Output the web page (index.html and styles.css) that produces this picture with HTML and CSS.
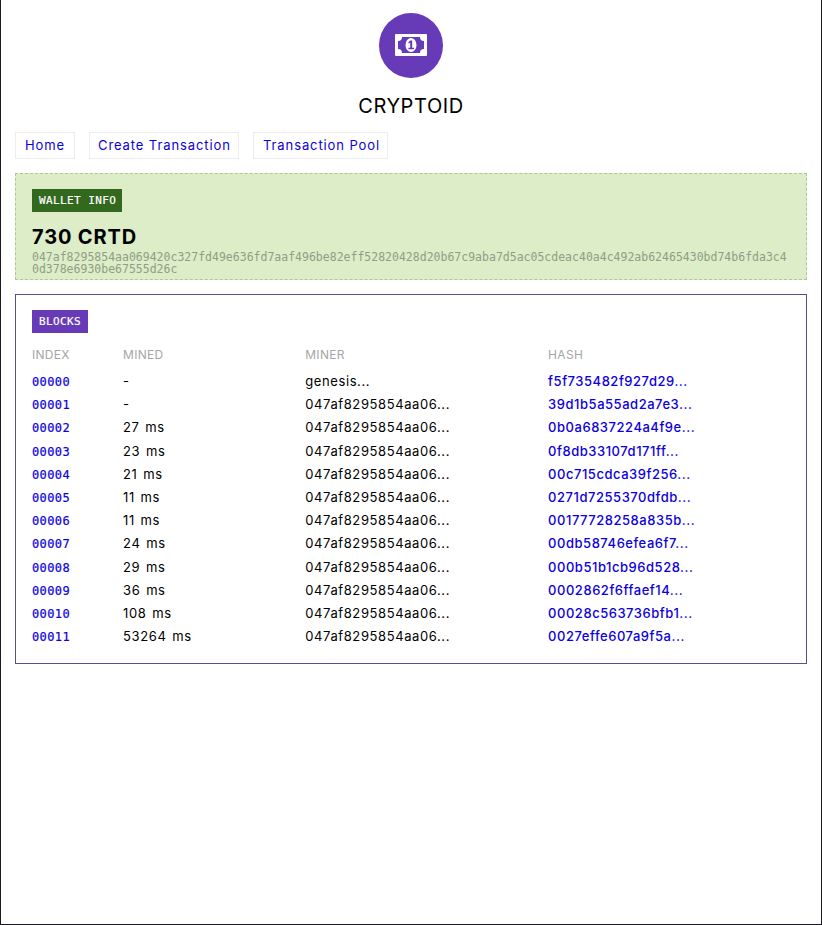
FILE: index.html
```html
<!DOCTYPE html>
<html lang="en">
<head>
<meta charset="utf-8">
<title>Cryptoid</title>
<link rel="stylesheet" href="styles.css">
</head>
<body>
<header class="brand">
  <div class="logo">
    <svg viewBox="0 0 32 22" width="32" height="22" aria-hidden="true">
      <path fill="#fff" fill-rule="evenodd" d="M1 0H31Q32 0 32 1V21Q32 22 31 22H1Q0 22 0 21V1Q0 0 1 0ZM7 3Q7 7 3 7V15Q7 15 7 19H25Q25 15 29 15V7Q25 7 25 3Z"/>
      <ellipse cx="16" cy="11" rx="5.5" ry="7" fill="#fff"/>
      <path fill="#673ab7" d="M15.3 6.5H17.2V13.8H19V15.3H13.4V13.8H15.2V8.8L13.5 9.5V7.9Z"/>
    </svg>
  </div>
  <h1>CRYPTOID</h1>
</header>
<nav class="menu">
  <a class="home" href="#">Home</a>
  <a class="create" href="#">Create Transaction</a>
  <a class="pool" href="#">Transaction Pool</a>
</nav>
<section class="wallet">
  <span class="tag tag-wallet">WALLET INFO</span>
  <h2>730 CRTD</h2>
  <p class="address">047af8295854aa069420c327fd49e636fd7aaf496be82eff52820428d20b67c9aba7d5ac05cdeac40a4c492ab62465430bd74b6fda3c40d378e6930be67555d26c</p>
</section>
<section class="blocks">
  <span class="tag">BLOCKS</span>
  <div class="row head"><span>INDEX</span><span>MINED</span><span>MINER</span><span>HASH</span></div>
  <div class="row"><a class="index" href="#">00000</a><span>-</span><span>genesis...</span><a class="hash" href="#">f5f735482f927d29...</a></div>
  <div class="row"><a class="index" href="#">00001</a><span>-</span><span>047af8295854aa06...</span><a class="hash" href="#">39d1b5a55ad2a7e3...</a></div>
  <div class="row"><a class="index" href="#">00002</a><span>27 ms</span><span>047af8295854aa06...</span><a class="hash" href="#">0b0a6837224a4f9e...</a></div>
  <div class="row"><a class="index" href="#">00003</a><span>23 ms</span><span>047af8295854aa06...</span><a class="hash" href="#">0f8db33107d171ff...</a></div>
  <div class="row"><a class="index" href="#">00004</a><span>21 ms</span><span>047af8295854aa06...</span><a class="hash" href="#">00c715cdca39f256...</a></div>
  <div class="row"><a class="index" href="#">00005</a><span>11 ms</span><span>047af8295854aa06...</span><a class="hash" href="#">0271d7255370dfdb...</a></div>
  <div class="row"><a class="index" href="#">00006</a><span>11 ms</span><span>047af8295854aa06...</span><a class="hash" href="#">00177728258a835b...</a></div>
  <div class="row"><a class="index" href="#">00007</a><span>24 ms</span><span>047af8295854aa06...</span><a class="hash" href="#">00db58746efea6f7...</a></div>
  <div class="row"><a class="index" href="#">00008</a><span>29 ms</span><span>047af8295854aa06...</span><a class="hash" href="#">000b51b1cb96d528...</a></div>
  <div class="row"><a class="index" href="#">00009</a><span>36 ms</span><span>047af8295854aa06...</span><a class="hash" href="#">0002862f6ffaef14...</a></div>
  <div class="row"><a class="index" href="#">00010</a><span>108 ms</span><span>047af8295854aa06...</span><a class="hash" href="#">00028c563736bfb1...</a></div>
  <div class="row"><a class="index" href="#">00011</a><span>53264 ms</span><span>047af8295854aa06...</span><a class="hash" href="#">0027effe607a9f5a...</a></div>
</section>
</body>
</html>
```
FILE: styles.css
```css
* { box-sizing: border-box; }
body {
  margin: 0;
  min-height: 925px;
  padding: 13px 14px 0;
  border: 1px solid #1c1a20;
  border-top: 0;
  background: #fff;
  color: #000;
  font: 13px "Inter", sans-serif;
}
a { color: #0c00dc; text-decoration: none; }
.brand { display: flex; flex-direction: column; align-items: center; }
.logo {
  display: flex;
  align-items: center;
  justify-content: center;
  width: 64px;
  height: 65px;
  padding-bottom: 2px;
  border-radius: 50%;
  background: #673ab7;
}
h1 { margin: 15px 0 0; font-size: 20px; font-weight: 400; line-height: 26px; letter-spacing: .6px; }
.menu { display: flex; gap: 14px; margin-top: 13px; }
.menu a {
  height: 27px;
  border: 1px solid #ececf2;
  padding-left: 9px;
  line-height: 25px;
  letter-spacing: .9px;
  white-space: nowrap;
}
.menu .home { width: 60px; }
.menu .create { width: 150px; padding-left: 8px; }
.menu .pool { width: 135px; }
.wallet {
  height: 107px;
  margin-top: 14px;
  padding: 15px 16px 0;
  border: 1px dashed #aec796;
  background: #dcedc8;
}
.tag {
  display: block;
  width: 56px;
  height: 23px;
  padding-left: 7px;
  background: #673ab7;
  color: #fff;
  font: 11px/24px "DejaVu Sans Mono", monospace;
  letter-spacing: .4px;
  -webkit-text-stroke: .2px currentColor;
}
.tag-wallet { width: 90px; background: #33691e; }
h2 { margin: 12px 0 0; font-size: 20px; font-weight: 700; line-height: 26px; letter-spacing: .85px; }
.address {
  margin: 1px 0 0;
  color: #8f9e86;
  font: 11.5px/12px "DejaVu Sans Mono", monospace;
  word-break: break-all;
}
.blocks {
  height: 370px;
  margin-top: 14px;
  padding: 15px 15px 0 16px;
  border: 1px solid #5e4b97;
}
.row {
  display: grid;
  grid-template-columns: 3fr 6fr 8fr 8fr;
  height: 23.2px;
  line-height: 23.2px;
  letter-spacing: .6px;
  word-spacing: 1.5px;
  white-space: nowrap;
}
.head { height: 37px; line-height: 43px; color: #a6a6a6; font-size: 12px; letter-spacing: .3px; }
.hash { font-weight: 500; letter-spacing: .53px; }
.index {
  font: 12px/24px "DejaVu Sans Mono", monospace;
  letter-spacing: .4px;
  -webkit-text-stroke: .2px currentColor;
}
```
